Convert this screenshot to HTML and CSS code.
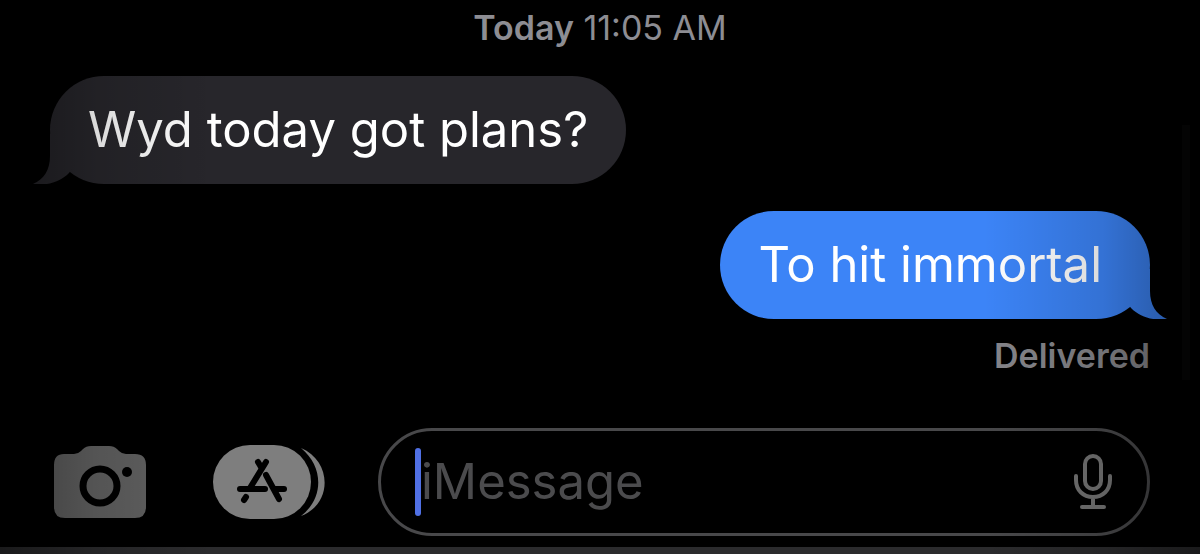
FILE: index.html
```html
<!DOCTYPE html>
<html lang="en">
<head>
    <meta charset="UTF-8">
    <meta name="viewport" content="width=device-width, initial-scale=1.0">
    <title>Messages</title>
    <link rel="stylesheet" href="styles.css">
</head>
<body>
    <div class="screen">
        <main class="thread">
            <p class="timestamp"><strong>Today</strong> 11:05 AM</p>
            <div class="bubble received">
                Wyd today got plans?
                <svg class="tail" viewBox="0 0 50 50" aria-hidden="true">
                    <path d="M17 0V22C17 36 11 45 0 50C14 52 27 48 36 39L50 20V0Z"/>
                </svg>
            </div>
            <div class="bubble sent">
                To hit immortal
                <svg class="tail" viewBox="0 0 50 50" aria-hidden="true">
                    <path d="M33 0V22C33 36 39 45 50 50C36 52 23 48 14 39L0 20V0Z"/>
                </svg>
            </div>
            <p class="status">Delivered</p>
        </main>
        <form class="composer">
            <button type="button" class="icon-button" aria-label="Camera">
                <svg class="camera" width="94" height="74" viewBox="0 0 94 74">
                    <path class="camera-body" d="M11 9H21Q25 9 28 6L30 4Q33 1 38 1H56Q61 1 64 4L66 6Q69 9 73 9H82Q93 9 93 20V62Q93 73 82 73H12Q1 73 1 62V20Q1 9 11 9Z"/>
                    <circle class="camera-ring" cx="47" cy="41" r="17"/>
                    <circle cx="74" cy="27" r="5"/>
                </svg>
            </button>
            <button type="button" class="icon-button" aria-label="Apps">
                <svg class="apps" width="114" height="76" viewBox="0 0 114 76">
                    <path class="apps-body" d="M89 4C120 17 121 60 89 72C112 54 112 23 89 4Z"/>
                    <rect class="apps-body" x="1" y="1" width="98" height="74" rx="37"/>
                    <g class="apps-lines">
                        <path d="M54 18L38 44"/>
                        <path d="M46 18L49 23"/>
                        <path d="M54 31L67 55"/>
                        <path d="M28 45H53"/>
                        <path d="M63 45H72"/>
                        <path d="M34 53L32 56"/>
                    </g>
                </svg>
            </button>
            <div class="field">
                <span class="caret"></span>
                <input type="text" class="message-input" placeholder="iMessage" aria-label="iMessage">
                <button type="button" class="icon-button" aria-label="Dictate">
                    <svg class="mic" width="38" height="56" viewBox="0 0 38 56">
                        <rect x="11" y="2" width="16" height="33" rx="8"/>
                        <path d="M2 22V26C2 36 9 43 19 43S36 36 36 26V22M19 43V53M8 53H30"/>
                    </svg>
                </button>
            </div>
        </form>
        <div class="keyboard-edge"></div>
        <div class="shade"></div>
        <div class="scroll-indicator"></div>
    </div>
</body>
</html>
```
FILE: styles.css
```css
* { box-sizing: border-box; }
body { margin: 0; background: #000; font-family: Inter, sans-serif; color: #fff; }
p { margin: 0; }
.screen { position: relative; min-height: 100vh; display: flex; flex-direction: column; overflow: hidden; }

.thread { display: flex; flex-direction: column; padding: 8px 50px 0; }
.timestamp { font-size: 34px; line-height: 40px; color: #8d8d93; text-align: center; margin-bottom: 28px; }
.timestamp strong { font-weight: 600; }
.bubble { position: relative; padding: 24px 38px; border-radius: 54px; font-size: 49px; line-height: 60px; }
.received { align-self: flex-start; background: #27262b; fill: #27262b; }
.sent { align-self: flex-end; padding-right: 48px; background: #3c84f7; fill: #3c84f7; margin-top: 27px; }
.tail { position: absolute; bottom: 0; width: 50px; height: 50px; }
.received .tail { left: -17px; }
.sent .tail { right: -17px; }
.status { align-self: flex-end; font-size: 34px; line-height: 40px; font-weight: 600; color: #85858a; margin-top: 17px; }

.composer { display: flex; align-items: center; padding: 52px 50px 11px; }
.icon-button { display: flex; flex: none; padding: 0; border: 0; background: none; cursor: pointer; }
.camera { margin: 0 65px 0 3px; }
.camera-body { fill: #626262; }
.camera-ring { fill: none; stroke: #000; stroke-width: 7; }
.apps { margin-right: 52px; }
.apps-body { fill: #7e7e7e; }
.apps-lines { fill: none; stroke: #000; stroke-width: 6; stroke-linecap: round; }
.field { flex: 1; min-width: 0; height: 108px; display: flex; align-items: center; padding: 0 35px 0 34px; border: 3px solid #48484a; border-radius: 54px; }
.caret { flex: none; width: 6px; height: 68px; border-radius: 3px; background: #5070e4; }
.message-input { flex: 1; min-width: 0; padding: 0; border: 0; outline: 0; background: none; font: 49px/60px Inter, sans-serif; color: #fff; caret-color: #5070e4; }
.message-input::placeholder { color: #4b4b4d; opacity: 1; }
.mic { fill: none; stroke: #737373; stroke-width: 4; stroke-linecap: round; stroke-linejoin: round; }

.keyboard-edge { flex: 1; background: #2b2b2d; }
/* darkens both sides of the screen */
.shade { position: absolute; inset: 0; pointer-events: none; background: linear-gradient(to right, rgba(0, 0, 0, .4), rgba(0, 0, 0, .14) 8%, transparent 18%, transparent 82%, rgba(0, 0, 0, .14) 92%, rgba(0, 0, 0, .4)); }
.scroll-indicator { position: absolute; top: 125px; right: 10px; width: 8px; height: 255px; background: #040404; }
```
